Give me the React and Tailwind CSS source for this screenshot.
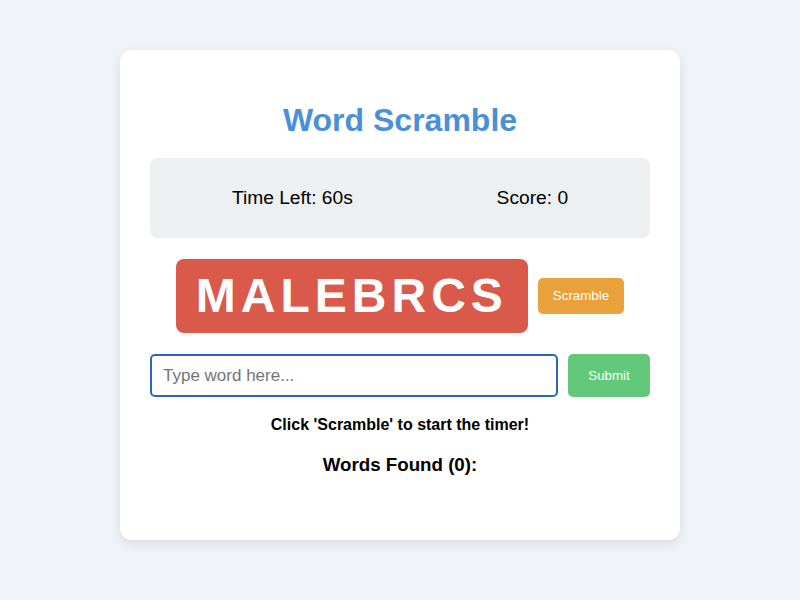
export default function App() {
  return (
    <div
      className="min-h-screen bg-[#f0f4f8] pt-[50px]"
      style={{ fontFamily: '"Liberation Sans", Arial, sans-serif' }}
    >
      <div className="mx-auto w-[560px] rounded-xl bg-white p-[30px] text-center shadow-[0_4px_14px_rgba(0,0,0,0.1)]">
        <h1 className="mt-[22px] mb-[20px] text-[32px] font-bold leading-[36px] text-[#4a90d9]">
          Word Scramble
        </h1>
        <div className="flex h-[80px] items-center justify-around rounded-lg bg-[#ecf0f1] px-[10px] text-[19.2px] text-black">
          <span>Time Left: 60s</span>
          <span>Score: 0</span>
        </div>
        <div className="mt-[21px] flex items-center justify-center">
          <div className="rounded-lg bg-[#d95a4a] px-5 py-[10px] text-[48px] font-bold leading-[54px] tracking-[5px] text-white">
            MALEBRCS
          </div>
          <button className="ml-[10px] h-[36px] rounded-[5px] bg-[#e9a13c] px-[15px] text-[13.33px] text-white">
            Scramble
          </button>
        </div>
        <div className="mt-[21px] flex gap-[10px]">
          <input
            className="h-[43px] flex-1 rounded-[5px] border-2 border-[#2a64c8] px-[11px] text-[17px] text-black outline-none placeholder:text-[#757575]"
            placeholder="Type word here..."
          />
          <button className="h-[43px] w-[82px] rounded-[5px] bg-[#62c97a] text-[13.33px] text-white">
            Submit
          </button>
        </div>
        <p className="mt-[19px] text-[16px] font-bold leading-[18px] text-black">
          Click 'Scramble' to start the timer!
        </p>
        <h3 className="mt-[20px] mb-[34px] text-[18.72px] font-bold leading-[21.5px] text-black">
          Words Found (0):
        </h3>
      </div>
    </div>
  );
}
